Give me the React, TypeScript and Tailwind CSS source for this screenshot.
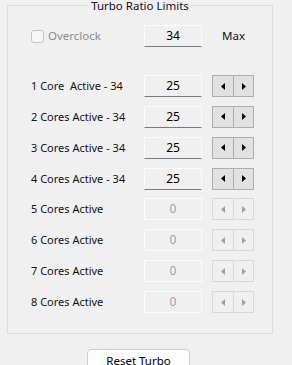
const rows = [
  { label: "1 Core  Active - 34", value: "25", enabled: true },
  { label: "2 Cores Active - 34", value: "25", enabled: true },
  { label: "3 Cores Active - 34", value: "25", enabled: true },
  { label: "4 Cores Active - 34", value: "25", enabled: true },
  { label: "5 Cores Active", value: "0", enabled: false },
  { label: "6 Cores Active", value: "0", enabled: false },
  { label: "7 Cores Active", value: "0", enabled: false },
  { label: "8 Cores Active", value: "0", enabled: false },
];

function Arrow({ dir, enabled }: { dir: "left" | "right"; enabled: boolean }) {
  return (
    <svg width="4" height="7" viewBox="0 0 4 7" className={enabled ? "fill-black" : "fill-[#a0a0a0]"}>
      {dir === "left" ? <path d="M4 0 L0 3.5 L4 7 Z" /> : <path d="M0 0 L4 3.5 L0 7 Z" />}
    </svg>
  );
}

function Spinner({ enabled }: { enabled: boolean }) {
  const btn = enabled
    ? "flex items-center justify-center bg-[#e1e1e1] border border-[#adadad]"
    : "flex items-center justify-center bg-[#f0f0f0] border border-[#d9d9d9]";
  return (
    <div className="flex h-[22px] ml-[10px]">
      <div className={btn + " w-[22px]"}>
        <Arrow dir="left" enabled={enabled} />
      </div>
      <div className={btn + " w-[20px] border-l-0"}>
        <Arrow dir="right" enabled={enabled} />
      </div>
    </div>
  );
}

function ValueBox({ value, enabled }: { value: string; enabled: boolean }) {
  return (
    <div
      className={
        "w-[58px] h-[22px] flex justify-center pt-[2px] text-[12px] bg-[#f0f0f0] border border-[#fbfbfb] " +
        (enabled ? "border-b-[#7a7a7a] text-black" : "text-[#a0a0a0]")
      }
    >
      {value}
    </div>
  );
}

export default function App() {
  return (
    <div
      className="w-[292px] h-[365px] overflow-hidden bg-[#f0f0f0] text-[11px] leading-[16px] text-[#101018]"
      style={{ fontFamily: '"Noto Sans", "Open Sans", sans-serif' }}
    >
      <div className="pt-[5px] pl-[7px]">
        <div className="relative w-[266px] h-[329px] border border-[#dcdcdc]">
          {/* group title sits on the border */}
          <div className="absolute -top-[7px] left-1/2 -translate-x-1/2 px-[2px] bg-[#f0f0f0] whitespace-nowrap text-[11.5px] leading-[14px] text-[#1a0a1a]">
            Turbo Ratio Limits
          </div>

          <div className="flex items-center pl-[23px] pt-[19px]">
            <div className="w-[113px] flex items-center gap-[4px] text-[#8d8d8d] text-[11.5px]">
              <span className="w-[13px] h-[13px] rounded-[3px] border border-[#c4c4c4] bg-[#f7f7f7]" />
              <span>Overclock</span>
            </div>
            <ValueBox value="34" enabled />
            <span className="ml-[20px] text-[11.5px]">Max</span>
          </div>

          <div className="flex flex-col gap-[8.86px] pl-[23px] pt-[28px]">
            {rows.map((r) => (
              <div key={r.label} className="flex items-center">
                <span className="w-[113px] whitespace-pre">{r.label}</span>
                <ValueBox value={r.value} enabled={r.enabled} />
                <Spinner enabled={r.enabled} />
              </div>
            ))}
          </div>
        </div>

        <div className="flex justify-center pr-[22px] pt-[15px]">
          <button className="w-[103px] h-[24px] rounded-[4px] border border-[#cccccc] bg-[#fdfdfd] pt-[4px] flex justify-center text-[11.5px] leading-[14px] text-black">
            Reset Turbo
          </button>
        </div>
      </div>
    </div>
  );
}
